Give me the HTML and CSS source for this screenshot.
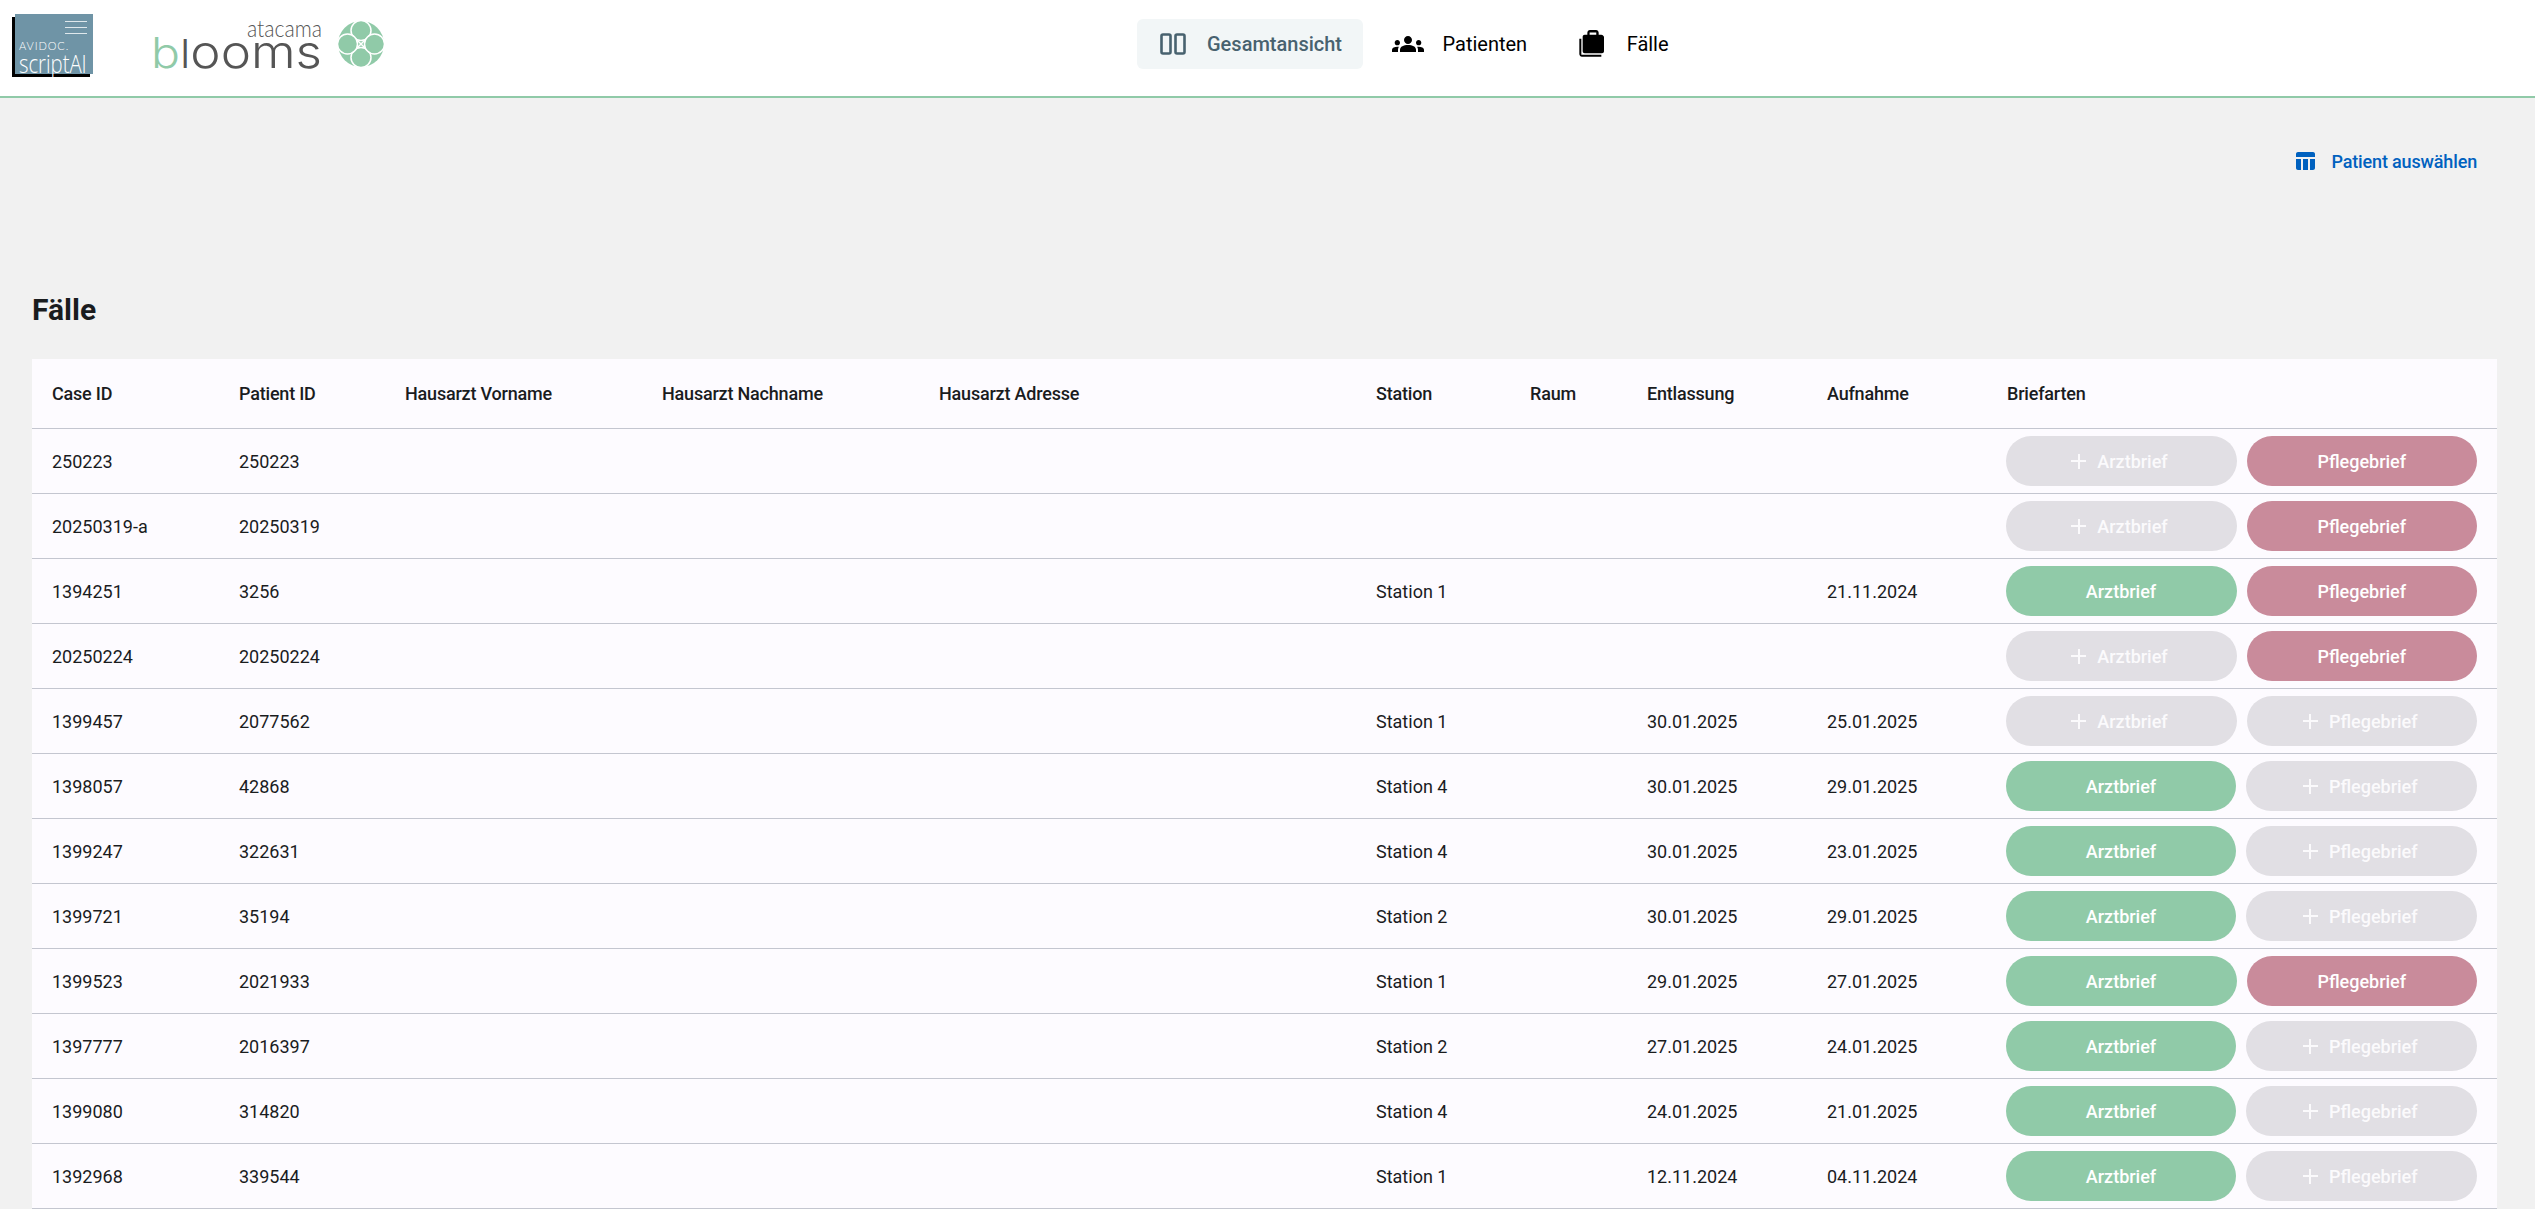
FILE: index.html
```html
<!DOCTYPE html>
<html lang="de">
<head>
    <meta charset="UTF-8">
    <meta name="viewport" content="width=device-width, initial-scale=1.0">
    <title>Avidoc ScriptAI</title>
    <link rel="stylesheet" href="styles.css">
</head>
<body>
    <header class="top-bar">
        <!-- Avidoc logo -->
        <div class="logo-script">
            <div class="logo-lines"><span></span><span></span><span></span></div>
            <div class="logo-avidoc">AVIDOC.</div>
            <div class="logo-name">scriptAI</div>
        </div>
        <!-- Atacama blooms logo -->
        <svg class="logo-blooms" viewBox="0 0 240 60" xmlns="http://www.w3.org/2000/svg">
            <text class="blooms-small" x="169" y="23" text-anchor="end" textLength="75" lengthAdjust="spacingAndGlyphs">atacama</text>
            <text class="blooms-b" x="-2" y="53.5" textLength="29" lengthAdjust="spacingAndGlyphs">b</text>
            <text class="blooms-big" x="27" y="53.5" textLength="142" lengthAdjust="spacingAndGlyphs"><tspan class="blooms-l">l</tspan>ooms</text>
            <circle cx="208" cy="30" r="23" fill="#90caa8"/>
            <g fill="#90caa8" stroke="#fff" stroke-width="1.5">
                <circle cx="208" cy="16.500" r="10"/>
                <circle cx="208" cy="43.500" r="10"/>
                <circle cx="194.500" cy="30" r="10"/>
                <circle cx="221.500" cy="30" r="10"/>
                <path d="M204 26l8 8M212 26l-8 8"/>
            </g>
        </svg>
        <nav class="nav">
            <a class="nav-item active">
                <svg class="nav-icon" viewBox="0 0 32 32" xmlns="http://www.w3.org/2000/svg" fill="none" stroke="currentColor" stroke-width="2.6">
                    <rect x="4.500" y="6.500" width="9" height="19" rx="1.5"/>
                    <rect x="18.500" y="6.500" width="9" height="19" rx="1.5"/>
                </svg>
                Gesamtansicht
            </a>
            <a class="nav-item">
                <svg class="nav-icon" viewBox="0 0 24 24" xmlns="http://www.w3.org/2000/svg" fill="currentColor">
                    <path d="M12 12.75c1.63 0 3.07.39 4.24.9 1.08.48 1.76 1.56 1.76 2.73V18H6v-1.61c0-1.18.68-2.26 1.76-2.73 1.17-.52 2.61-.91 4.24-.91zM4 13c1.1 0 2-.9 2-2s-.9-2-2-2-2 .9-2 2 .9 2 2 2zm1.13 1.1c-.37-.06-.74-.1-1.13-.1-.99 0-1.93.21-2.78.58C.48 14.9 0 15.62 0 16.43V18h4.5v-1.61c0-.83.23-1.61.63-2.29zM20 13c1.1 0 2-.9 2-2s-.9-2-2-2-2 .9-2 2 .9 2 2 2zm4 3.43c0-.81-.48-1.53-1.22-1.85-.85-.37-1.79-.58-2.78-.58-.39 0-.76.04-1.13.1.4.68.63 1.46.63 2.29V18H24v-1.57zM12 6c1.66 0 3 1.34 3 3s-1.34 3-3 3-3-1.34-3-3 1.34-3 3-3z"/>
                </svg>
                Patienten
            </a>
            <a class="nav-item">
                <svg class="nav-icon" viewBox="0 0 24 24" xmlns="http://www.w3.org/2000/svg" fill="currentColor">
                    <path d="M4 8H2.5v11.5c0 1.1.9 2 2 2H19V20H4V8z"/>
                    <path d="M17 5V3.5C17 2.4 16.100 1.500 15 1.500h-4.500c-1.100 0-2 .9-2 2V5H6.500c-.8 0-1.500.7-1.500 1.500V17.500c0 .8.7 1.500 1.500 1.500h13c.8 0 1.500-.7 1.500-1.500V6.500C20.500 5.700 19.800 5 19 5h-2zm-1.800 0h-5V3.300h5V5z"/>
                </svg>
                Fälle
            </a>
        </nav>
    </header>

    <main class="main">
        <div class="actions">
            <a class="select-link">
                <svg class="select-icon" viewBox="3 3 19 18" xmlns="http://www.w3.org/2000/svg" fill="currentColor">
                    <path d="M10 10.020h5V21h-5zM17 21h3c1.100 0 2-.9 2-2v-9h-5v11zm3-18H5c-1.100 0-2 .9-2 2v3h19V5c0-1.100-.9-2-2-2zM3 19c0 1.100.9 2 2 2h3V10H3v9z"/>
                </svg>
                Patient auswählen
            </a>
        </div>

        <h2 class="title">Fälle</h2>

        <table class="cases">
            <thead>
                <tr>
                    <th class="col-case">Case ID</th>
                    <th class="col-patient">Patient ID</th>
                    <th class="col-first">Hausarzt Vorname</th>
                    <th class="col-last">Hausarzt Nachname</th>
                    <th class="col-address">Hausarzt Adresse</th>
                    <th class="col-station">Station</th>
                    <th class="col-room">Raum</th>
                    <th class="col-out">Entlassung</th>
                    <th class="col-in">Aufnahme</th>
                    <th>Briefarten</th>
                </tr>
            </thead>
            <tbody>
                <tr><td>250223</td><td>250223</td><td></td><td></td><td></td><td></td><td></td><td></td><td></td>
                    <td><div class="letters"><button class="btn arzt add"><span class="plus"></span>Arztbrief</button><button class="btn pflege done">Pflegebrief</button></div></td></tr>
                <tr><td>20250319-a</td><td>20250319</td><td></td><td></td><td></td><td></td><td></td><td></td><td></td>
                    <td><div class="letters"><button class="btn arzt add"><span class="plus"></span>Arztbrief</button><button class="btn pflege done">Pflegebrief</button></div></td></tr>
                <tr><td>1394251</td><td>3256</td><td></td><td></td><td></td><td>Station 1</td><td></td><td></td><td>21.11.2024</td>
                    <td><div class="letters"><button class="btn arzt done">Arztbrief</button><button class="btn pflege done">Pflegebrief</button></div></td></tr>
                <tr><td>20250224</td><td>20250224</td><td></td><td></td><td></td><td></td><td></td><td></td><td></td>
                    <td><div class="letters"><button class="btn arzt add"><span class="plus"></span>Arztbrief</button><button class="btn pflege done">Pflegebrief</button></div></td></tr>
                <tr><td>1399457</td><td>2077562</td><td></td><td></td><td></td><td>Station 1</td><td></td><td>30.01.2025</td><td>25.01.2025</td>
                    <td><div class="letters"><button class="btn arzt add"><span class="plus"></span>Arztbrief</button><button class="btn pflege add"><span class="plus"></span>Pflegebrief</button></div></td></tr>
                <tr><td>1398057</td><td>42868</td><td></td><td></td><td></td><td>Station 4</td><td></td><td>30.01.2025</td><td>29.01.2025</td>
                    <td><div class="letters"><button class="btn arzt done">Arztbrief</button><button class="btn pflege add"><span class="plus"></span>Pflegebrief</button></div></td></tr>
                <tr><td>1399247</td><td>322631</td><td></td><td></td><td></td><td>Station 4</td><td></td><td>30.01.2025</td><td>23.01.2025</td>
                    <td><div class="letters"><button class="btn arzt done">Arztbrief</button><button class="btn pflege add"><span class="plus"></span>Pflegebrief</button></div></td></tr>
                <tr><td>1399721</td><td>35194</td><td></td><td></td><td></td><td>Station 2</td><td></td><td>30.01.2025</td><td>29.01.2025</td>
                    <td><div class="letters"><button class="btn arzt done">Arztbrief</button><button class="btn pflege add"><span class="plus"></span>Pflegebrief</button></div></td></tr>
                <tr><td>1399523</td><td>2021933</td><td></td><td></td><td></td><td>Station 1</td><td></td><td>29.01.2025</td><td>27.01.2025</td>
                    <td><div class="letters"><button class="btn arzt done">Arztbrief</button><button class="btn pflege done">Pflegebrief</button></div></td></tr>
                <tr><td>1397777</td><td>2016397</td><td></td><td></td><td></td><td>Station 2</td><td></td><td>27.01.2025</td><td>24.01.2025</td>
                    <td><div class="letters"><button class="btn arzt done">Arztbrief</button><button class="btn pflege add"><span class="plus"></span>Pflegebrief</button></div></td></tr>
                <tr><td>1399080</td><td>314820</td><td></td><td></td><td></td><td>Station 4</td><td></td><td>24.01.2025</td><td>21.01.2025</td>
                    <td><div class="letters"><button class="btn arzt done">Arztbrief</button><button class="btn pflege add"><span class="plus"></span>Pflegebrief</button></div></td></tr>
                <tr><td>1392968</td><td>339544</td><td></td><td></td><td></td><td>Station 1</td><td></td><td>12.11.2024</td><td>04.11.2024</td>
                    <td><div class="letters"><button class="btn arzt done">Arztbrief</button><button class="btn pflege add"><span class="plus"></span>Pflegebrief</button></div></td></tr>
            </tbody>
        </table>
    </main>
</body>
</html>
```

FILE: styles.css
```css
body {
    margin: 0;
    height: 1209px;
    overflow: hidden;
    background-color: #f1f1f1;
    color: #1a1c1e;
    font-family: Roboto, "Liberation Sans", sans-serif;
    font-size: 18px;
}

/* Top Bar */
.top-bar {
    height: 88px;
    display: flex;
    align-items: center;
    background-color: #fff;
    border-bottom: 2px solid #90caa8;
    padding: 0 0 8px 15px;
}

.logo-script {
    width: 78px;
    height: 60px;
    flex-shrink: 0;
    background-color: #6f94a6;
    box-shadow: -3px 3px 0 #000;
    color: #fff;
}

.logo-lines {
    display: flex;
    flex-direction: column;
    gap: 5px;
    width: 22px;
    margin: 7px 0 0 50px;
}

.logo-lines span {
    height: 1px;
    background-color: #dfe8ec;
}

.logo-avidoc {
    font-family: Lato, sans-serif;
    font-weight: 300;
    font-size: 11px;
    line-height: 10px;
    letter-spacing: 0.9px;
    margin: 7px 0 0 4px;
}

.logo-name {
    font-family: "Open Sans", sans-serif;
    font-weight: 300;
    font-size: 26px;
    line-height: 24px;
    transform: scaleX(0.78);
    transform-origin: left;
    margin-left: 4px;
    white-space: nowrap;
}

.logo-blooms {
    width: 240px;
    height: 60px;
    margin-left: 60px;
    flex-shrink: 0;
}

.blooms-small {
    font-family: Lato, sans-serif;
    font-weight: 300;
    font-size: 23px;
    fill: #555;
}

.blooms-big,
.blooms-b {
    font-family: Inter, sans-serif;
    font-weight: 300;
    font-size: 46px;
    fill: #555;
}

.blooms-b {
    font-size: 42px;
    fill: #90caa8;
}

.blooms-l {
    font-size: 40px;
}

.nav {
    display: flex;
    align-items: center;
    gap: 8.5px;
    margin-left: 744px;
}

.nav-item {
    height: 50px;
    display: flex;
    align-items: center;
    gap: 19px;
    padding: 0 20px;
    border-radius: 6px;
    color: #000;
    font-size: 20px;
    cursor: pointer;
}

.nav-item.active {
    gap: 18px;
    padding-right: 21px;
    background-color: #f2f6f7;
    color: #48626f;
    font-weight: 500;
}

.nav-icon {
    width: 32px;
    height: 32px;
}

/* Main */
.main {
    padding: 0 38px 0 32px;
}

.actions {
    display: flex;
    justify-content: flex-end;
    padding: 50px 20px 0 0;
}

.select-link {
    display: flex;
    align-items: center;
    gap: 16px;
    height: 26px;
    color: #0061bf;
    font-size: 18px;
    font-weight: 500;
    letter-spacing: -0.15px;
    cursor: pointer;
}

.select-icon {
    width: 19px;
    height: 18px;
}

.title {
    margin: 0;
    padding: 118px 0 31px;
    font-size: 30px;
    line-height: 36px;
    font-weight: 700;
}

/* Table */
.cases {
    width: 100%;
    table-layout: fixed;
    border-collapse: collapse;
    background-color: #fdfbff;
}

.cases th,
.cases td {
    padding: 0 0 0 20px;
    text-align: left;
    border-bottom: 1px solid #c4c6d0;
}

.cases th {
    height: 69px;
    font-weight: 500;
    letter-spacing: -0.2px;
}

.cases td {
    height: 64px;
}

/* widths are without the 20px cell padding */
.col-case { width: 167px; }
.col-patient { width: 146px; }
.col-first { width: 237px; }
.col-last { width: 257px; }
.col-address { width: 417px; }
.col-station { width: 134px; }
.col-room { width: 97px; }
.col-out { width: 160px; }
.col-in { width: 160px; }

.letters {
    display: flex;
    gap: 10px;
    margin-left: -1.5px;
    padding-right: 20px;
}

.btn {
    height: 50px;
    display: flex;
    align-items: center;
    justify-content: center;
    gap: 11px;
    border: none;
    border-radius: 25px;
    color: #fff;
    font-family: inherit;
    font-size: 18px;
    font-weight: 500;
    cursor: pointer;
}

.arzt { width: 232px; }
.pflege { width: 231.5px; }

.btn.add {
    padding-right: 9px;
    background-color: #e1dfe4;
    color: #fbfafc;
}

.arzt.done { background-color: #90caa8; }
.pflege.done { background-color: #c98b9b; }

.plus {
    width: 15px;
    height: 15px;
    background:
        linear-gradient(currentColor, currentColor) center / 100% 2px no-repeat,
        linear-gradient(currentColor, currentColor) center / 2px 100% no-repeat;
}
```
